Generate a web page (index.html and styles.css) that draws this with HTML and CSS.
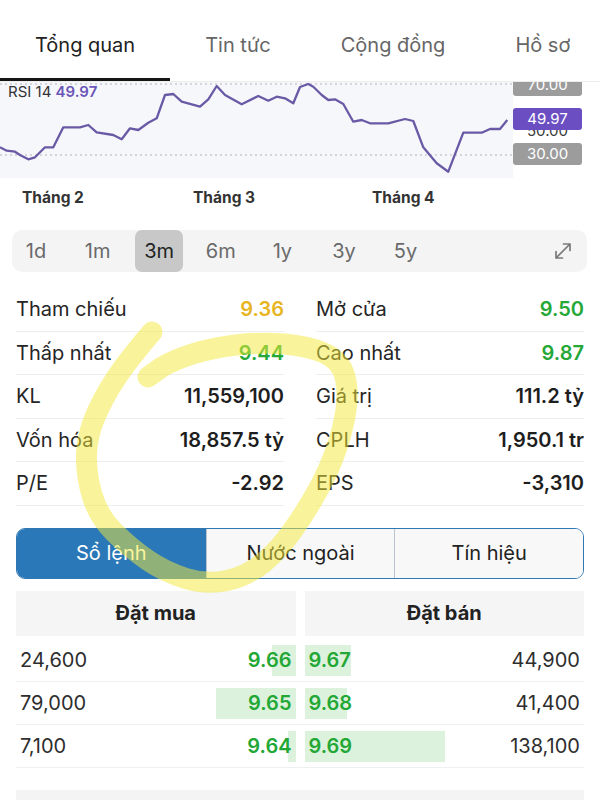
FILE: index.html
```html
<!DOCTYPE html>
<html lang="vi">
<head>
<meta charset="utf-8">
<title>Tổng quan</title>
<link rel="stylesheet" href="styles.css">
</head>
<body>
<div class="page">
  <nav class="tabs">
    <div class="tab active">Tổng quan</div>
    <div class="tab">Tin tức</div>
    <div class="tab">Cộng đồng</div>
    <div class="tab">Hồ sơ</div>
  </nav>

  <section class="chart">
    <div class="plot">
      <span class="rsi">RSI 14 <b>49.97</b></span>
      <svg class="plot-svg" width="513" height="96" viewBox="0 0 513 96">
        <line x1="0" y1="2" x2="513" y2="2" class="grid"/>
        <line x1="0" y1="73" x2="513" y2="73" class="grid"/>
        <polyline class="rsi-line" points="0,65.3 6.7,68.7 15,69.7 20,73 28.3,77.3 35,75.3 45,65.3 53.3,65.3 63.3,45.3 80,45.3 88.3,43 96.7,50.3 113.3,53 121.7,57.3 130,46.3 138.3,48 148.3,40.7 156.7,36.3 165,13 173.3,12 181.7,19.7 200,24.7 208.3,17.3 216.7,4 225,13 241.7,22.3 258.3,14 268.3,18.7 276.7,14.7 285,16.3 293.3,21.3 300,5 308.3,2 313.3,4.7 321.7,13 328.3,18 335,17.3 343.3,22 353.3,39.7 361.7,38 370,41.3 388.3,41.3 405,37 413.3,39 423.3,65.3 436.7,81.3 448.3,89.7 463.3,50.7 481.7,50.7 490,47 500,47 507.3,38"/>
      </svg>
    </div>
    <div class="axis">
      <span class="tag tag-70">70.00</span>
      <span class="mid-val">50.00</span>
      <span class="tag tag-cur">49.97</span>
      <span class="tag tag-30">30.00</span>
    </div>
  </section>

  <div class="months">
    <span class="month m2">Tháng 2</span>
    <span class="month m3">Tháng 3</span>
    <span class="month m4">Tháng 4</span>
  </div>

  <div class="periods">
    <span class="period">1d</span>
    <span class="period">1m</span>
    <span class="period selected">3m</span>
    <span class="period">6m</span>
    <span class="period">1y</span>
    <span class="period">3y</span>
    <span class="period">5y</span>
    <span class="period expand">
      <svg width="20" height="20" viewBox="0 0 20 20"><path d="M3 17 L17 3 M10.5 3 H17 V9.5 M3 10.5 V17 H9.5" fill="none" stroke="#7a7a7a" stroke-width="1.7" stroke-linecap="round" stroke-linejoin="round"/></svg>
    </span>
  </div>

  <div class="stats">
    <div class="stat"><span class="label">Tham chiếu</span><span class="val ref">9.36</span></div>
    <div class="stat"><span class="label">Mở cửa</span><span class="val up">9.50</span></div>
    <div class="stat"><span class="label">Thấp nhất</span><span class="val up">9.44</span></div>
    <div class="stat"><span class="label">Cao nhất</span><span class="val up">9.87</span></div>
    <div class="stat"><span class="label">KL</span><span class="val">11,559,100</span></div>
    <div class="stat"><span class="label">Giá trị</span><span class="val">111.2 tỷ</span></div>
    <div class="stat"><span class="label">Vốn hóa</span><span class="val">18,857.5 tỷ</span></div>
    <div class="stat"><span class="label">CPLH</span><span class="val">1,950.1 tr</span></div>
    <div class="stat"><span class="label">P/E</span><span class="val">-2.92</span></div>
    <div class="stat"><span class="label">EPS</span><span class="val">-3,310</span></div>
  </div>

  <div class="seg">
    <div class="seg-item active">Sổ lệnh</div>
    <div class="seg-item">Nước ngoài</div>
    <div class="seg-item">Tín hiệu</div>
  </div>

  <div class="book">
    <div class="book-head">
      <div class="head-cell">Đặt mua</div>
      <div class="head-cell">Đặt bán</div>
    </div>
    <div class="book-row">
      <div class="cell buy"><span class="bar" style="width:24px"></span><span class="vol">24,600</span><span class="price">9.66</span></div>
      <div class="cell sell"><span class="bar" style="width:46px"></span><span class="price">9.67</span><span class="vol">44,900</span></div>
    </div>
    <div class="book-row">
      <div class="cell buy"><span class="bar" style="width:80px"></span><span class="vol">79,000</span><span class="price">9.65</span></div>
      <div class="cell sell"><span class="bar" style="width:42px"></span><span class="price">9.68</span><span class="vol">41,400</span></div>
    </div>
    <div class="book-row">
      <div class="cell buy"><span class="bar" style="width:8px"></span><span class="vol">7,100</span><span class="price">9.64</span></div>
      <div class="cell sell"><span class="bar" style="width:140px"></span><span class="price">9.69</span><span class="vol">138,100</span></div>
    </div>
  </div>

  <div class="next"></div>

  <svg class="highlight" width="600" height="800" viewBox="0 0 600 800">
    <path d="M152,332 Q128,360 115.5,379 Q103,398 95,417 Q87,436 86.5,455 Q86,474 92,495 Q98,516 114,532 Q130,548 147.5,560 Q165,572 186,578.5 Q207,585 227,580.5 Q247,576 263,563 Q279,550 293,530 Q307,510 318,490 Q329,470 336,450 Q343,430 346,410 Q349,390 344.5,375 Q340,360 324,353 Q308,346 284,344 Q260,342 236,345 Q212,348 194,353.5 Q176,359 162,367 L148,377"/>
  </svg>
</div>
</body>
</html>
```

FILE: styles.css
```css
* { box-sizing: border-box; }

html, body {
  margin: 0;
  padding: 0;
  background: #ffffff;
}

body {
  font-family: Inter, "Noto Sans", "Liberation Sans", sans-serif;
  color: #222222;
  width: 600px;
  height: 800px;
  overflow: hidden;
}

.page {
  position: relative;
  width: 600px;
  height: 800px;
}

/* top tabs */
.tabs {
  display: flex;
  border-bottom: 1px solid #ececec;
  overflow: hidden;
  white-space: nowrap;
}

.tab {
  flex: 0 0 auto;
  padding: 30px 35px 18px;
  line-height: 30px;
  font-size: 20px;
  color: #666666;
  border-bottom: 3px solid transparent;
}

.tab.active {
  color: #222222;
  border-bottom-color: #151515;
}

/* chart */
.chart {
  display: flex;
  height: 96px;
}

.plot {
  position: relative;
  flex: 0 0 513px;
  background: #f6f7fb;
}

.plot-svg {
  display: block;
}

.grid {
  stroke: #c9c9cf;
  stroke-width: 1.3;
  stroke-dasharray: 2 3;
}

.rsi-line {
  fill: none;
  stroke: #6a5aa6;
  stroke-width: 2.3;
  stroke-linejoin: round;
}

.rsi {
  position: absolute;
  left: 8px;
  top: 1px;
  font-size: 15px;
  line-height: 18px;
  color: #333333;
}

.rsi b {
  color: #6b55b8;
  font-weight: 600;
}

.axis {
  position: relative;
  flex: 1;
  overflow: hidden;
}

.tag {
  position: absolute;
  left: 0;
  width: 69px;
  height: 22px;
  border-radius: 3px;
  background: #9c9c9c;
  color: #ffffff;
  font-size: 15px;
  line-height: 22px;
  text-align: center;
}

.tag-70 { top: -8px; }
.tag-cur { top: 26px; background: #6a4ec2; }
.tag-30 { top: 61px; }

.mid-val {
  position: absolute;
  left: 0;
  top: 40px;
  width: 69px;
  text-align: center;
  font-size: 15px;
  line-height: 18px;
  color: #3a3a3a;
}

/* month axis */
.months {
  position: relative;
  height: 42px;
}

.month {
  position: absolute;
  top: 10px;
  font-size: 15.5px;
  line-height: 20px;
  font-weight: 700;
  color: #333333;
}

.m2 { left: 22px; }
.m3 { left: 193px; }
.m4 { left: 372px; }

/* period selector */
.periods {
  display: flex;
  gap: 13.6px;
  margin: 10px 13px 0 12px;
  height: 42px;
  background: #f4f4f4;
  border-radius: 10px;
}

.period {
  flex: 0 0 48px;
  display: flex;
  align-items: center;
  justify-content: center;
  font-size: 20px;
  color: #6a6a6a;
  border-radius: 7px;
}

.period.selected {
  background: #c8c8c8;
  color: #222222;
}

.period.expand {
  margin-left: auto;
}

/* stats */
.stats {
  display: grid;
  grid-template-columns: 1fr 1fr;
  column-gap: 32px;
  padding: 0 16px;
  margin-top: 16px;
}

.stat {
  display: flex;
  justify-content: space-between;
  align-items: center;
  height: 43.5px;
  border-bottom: 1px solid #ededed;
  font-size: 20px;
}

.label {
  color: #252525;
}

.val {
  font-weight: 600;
  color: #1e1e1e;
}

.val.ref { color: #e8b522; }
.val.up { color: #26a838; }

/* segmented control */
.seg {
  display: grid;
  grid-template-columns: 1fr 1fr 1fr;
  margin: 22px 16px 0;
  height: 51px;
  border: 1.5px solid #2f78b4;
  border-radius: 9px;
  overflow: hidden;
}

.seg-item {
  display: flex;
  align-items: center;
  justify-content: center;
  background: #f8f8f8;
  font-size: 20px;
  color: #222222;
  border-left: 1px solid #b9c4cf;
}

.seg-item.active {
  background: #2a78b7;
  color: #ffffff;
  border-left: none;
}

/* order book */
.book {
  margin: 12px 16px 0;
}

.book-head {
  display: grid;
  grid-template-columns: 1fr 1fr;
  column-gap: 9px;
}

.head-cell {
  height: 45px;
  background: #f5f5f5;
  display: flex;
  align-items: center;
  justify-content: center;
  font-size: 20px;
  font-weight: 700;
  color: #222222;
}

.book-row {
  display: grid;
  grid-template-columns: 1fr 1fr;
  column-gap: 9px;
  height: 43px;
  border-bottom: 1px solid #efefef;
}

.book-head + .book-row {
  margin-top: 3px;
}

.cell {
  position: relative;
  display: flex;
  justify-content: space-between;
  align-items: center;
  padding: 0 4px;
  font-size: 20px;
}

.bar {
  position: absolute;
  top: 6px;
  height: 31px;
  background: #dcf2dd;
}

.buy .bar { right: 0; }
.sell .bar { left: 0; }

.vol, .price {
  position: relative;
}

.vol {
  color: #2e2e2e;
}

.price {
  font-weight: 600;
  color: #23a735;
}

.next {
  margin: 22px 16px 0;
  height: 20px;
  background: #f4f4f4;
}

/* hand-drawn highlighter annotation */
.highlight {
  position: absolute;
  left: 0;
  top: 0;
  pointer-events: none;
  opacity: 0.5;
}

.highlight path {
  fill: none;
  stroke: #f5eb3a;
  stroke-width: 21;
  stroke-linecap: round;
  stroke-linejoin: round;
}
```
